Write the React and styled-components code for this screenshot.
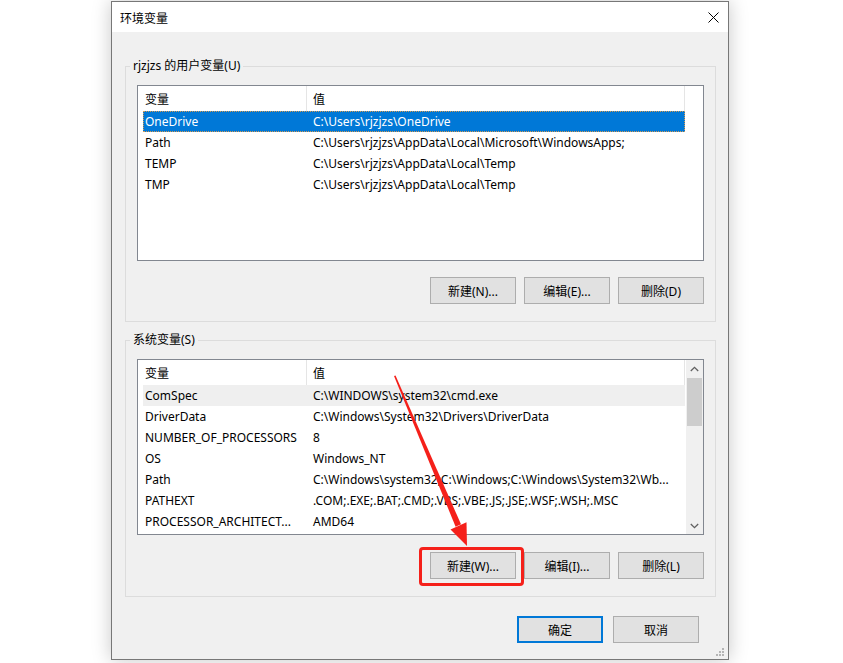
import React from "react";
import styled, { createGlobalStyle } from "styled-components";

const GlobalStyle = createGlobalStyle`
  html, body {
    margin: 0;
    padding: 0;
    background: #ffffff;
  }
  body {
    font-family: "Noto Sans", "Noto Sans CJK SC", sans-serif;
    font-size: 12px;
    color: #000;
  }
`;

const Page = styled.div`
  position: relative;
  width: 843px;
  height: 663px;
  overflow: hidden;
  padding-top: 1px;
  box-sizing: border-box;
`;

const Window = styled.div`
  position: relative;
  margin-left: 111px;
  width: 618px;
  box-sizing: border-box;
  border: 1px solid #777777;
  background: #f0f0f0;
  box-shadow: 0 0 18px rgba(0, 0, 0, 0.22);
`;

const TitleBar = styled.div`
  height: 30px;
  background: #ffffff;
  display: flex;
  align-items: center;
  justify-content: space-between;
  padding: 0 9px 0 8px;
  font-family: "Noto Sans CJK SC", sans-serif;
  font-size: 12px;
`;

const Body = styled.div`
  padding: 34px 12px 16px 13px;
  display: flex;
  flex-direction: column;
`;

const GroupBox = styled.div`
  border: 1px solid #dcdcdc;
  padding: 0 11px 17px 11px;
  margin-top: ${(p) => p.$gap || 0}px;
  display: flex;
  flex-direction: column;
`;

const GroupLabel = styled.div`
  margin: -9px 0 0 -7px;
  padding: 0 3px;
  width: fit-content;
  height: 16px;
  line-height: 16px;
  background: #f0f0f0;
  font-family: "Noto Sans", "Noto Sans CJK SC", sans-serif;
`;

const ListView = styled.div`
  margin-top: 11px;
  height: 176px;
  box-sizing: border-box;
  border: 1px solid #828790;
  background: #ffffff;
  display: flex;
  overflow: hidden;
`;

const ListContent = styled.div`
  flex: 1;
  display: flex;
  flex-direction: column;
  min-width: 0;
`;

const Header = styled.div`
  display: flex;
  height: 25px;
  flex-shrink: 0;
`;

const HeaderCell = styled.div`
  width: ${(p) => p.$w}px;
  box-sizing: border-box;
  padding-left: ${(p) => p.$pad}px;
  border-right: 1px solid #e5e5e5;
  display: flex;
  align-items: center;
  font-family: "Noto Sans CJK SC", sans-serif;
`;

const Rows = styled.div`
  padding-left: 5px;
  display: flex;
  flex-direction: column;
`;

const Row = styled.div`
  width: 542px;
  height: 21px;
  box-sizing: border-box;
  display: grid;
  grid-template-columns: 163px 1fr;
  align-items: center;
  white-space: nowrap;
  background: ${(p) => (p.$selected ? "#0078d7" : p.$hover ? "#efefef" : "transparent")};
  color: ${(p) => (p.$selected ? "#ffffff" : "#000000")};
  border: 1px dotted ${(p) => (p.$selected ? "#d49a52" : "transparent")};
`;

const NameCell = styled.span`
  padding-left: 1px;
  overflow: hidden;
`;

const ValueCell = styled.span`
  padding-left: 6px;
  overflow: hidden;
`;

const ScrollBar = styled.div`
  width: 17px;
  flex-shrink: 0;
  background: #f0f0f0;
  display: flex;
  flex-direction: column;
  align-items: center;
`;

const ScrollArrow = styled.div`
  height: 17px;
  width: 17px;
  display: flex;
  align-items: center;
  justify-content: center;
`;

const ScrollTrack = styled.div`
  flex: 1;
  width: 100%;
  display: flex;
  flex-direction: column;
  align-items: center;
`;

const ScrollThumb = styled.div`
  margin-top: 1px;
  width: 15px;
  height: 48px;
  background: #cdcdcd;
`;

const ButtonRow = styled.div`
  margin-top: ${(p) => p.$gap}px;
  display: flex;
  justify-content: flex-end;
  gap: ${(p) => p.$spacing || 8}px;
  padding-right: ${(p) => p.$right || 0}px;
`;

const ButtonWrap = styled.div`
  position: relative;
`;

const Button = styled.button`
  width: ${(p) => p.$w || 86}px;
  height: 27px;
  box-sizing: border-box;
  margin: 0;
  padding: 0;
  background: #e1e1e1;
  border: ${(p) => (p.$default ? "2px solid #0078d7" : "1px solid #adadad")};
  font-family: "Noto Sans", "Noto Sans CJK SC", sans-serif;
  font-size: 12px;
  color: #000;
`;

const Highlight = styled.div`
  position: absolute;
  top: -5px;
  left: -11px;
  right: -8px;
  bottom: -7px;
  border: 3px solid #f5201a;
  border-radius: 4px;
  pointer-events: none;
`;

const Grip = styled.svg`
  position: absolute;
  right: 3px;
  bottom: 2px;
`;

const Overlay = styled.svg`
  position: absolute;
  left: 0;
  top: 0;
  pointer-events: none;
`;

const userVars = [
  ["OneDrive", "C:\\Users\\rjzjzs\\OneDrive"],
  ["Path", "C:\\Users\\rjzjzs\\AppData\\Local\\Microsoft\\WindowsApps;"],
  ["TEMP", "C:\\Users\\rjzjzs\\AppData\\Local\\Temp"],
  ["TMP", "C:\\Users\\rjzjzs\\AppData\\Local\\Temp"],
];

const systemVars = [
  ["ComSpec", "C:\\WINDOWS\\system32\\cmd.exe"],
  ["DriverData", "C:\\Windows\\System32\\Drivers\\DriverData"],
  ["NUMBER_OF_PROCESSORS", "8"],
  ["OS", "Windows_NT"],
  ["Path", "C:\\Windows\\system32;C:\\Windows;C:\\Windows\\System32\\Wb..."],
  ["PATHEXT", ".COM;.EXE;.BAT;.CMD;.VBS;.VBE;.JS;.JSE;.WSF;.WSH;.MSC"],
  ["PROCESSOR_ARCHITECT...", "AMD64"],
];

function VarList({ rows, selected, hover, scroll }) {
  return (
    <ListView>
      <ListContent>
        <Header>
          <HeaderCell $w={169} $pad={7}>变量</HeaderCell>
          <HeaderCell $w={378} $pad={6}>值</HeaderCell>
        </Header>
        <Rows>
          {rows.map(([name, value], i) => (
            <Row key={name + i} $selected={i === selected} $hover={i === hover}>
              <NameCell>{name}</NameCell>
              <ValueCell>{value}</ValueCell>
            </Row>
          ))}
        </Rows>
      </ListContent>
      {scroll && (
        <ScrollBar>
          <ScrollArrow>
            <svg width="9" height="6" viewBox="0 0 9 6">
              <path d="M0.8 5 L4.5 1.3 L8.2 5" fill="none" stroke="#606060" strokeWidth="1.3" />
            </svg>
          </ScrollArrow>
          <ScrollTrack>
            <ScrollThumb />
          </ScrollTrack>
          <ScrollArrow>
            <svg width="9" height="6" viewBox="0 0 9 6">
              <path d="M0.8 1 L4.5 4.7 L8.2 1" fill="none" stroke="#606060" strokeWidth="1.3" />
            </svg>
          </ScrollArrow>
        </ScrollBar>
      )}
    </ListView>
  );
}

export default function App() {
  return (
    <Page>
      <GlobalStyle />
      <Window>
        <TitleBar>
          <span>环境变量</span>
          <svg width="11" height="11" viewBox="0 0 11 11">
            <path d="M0.5 0.5 L10.5 10.5 M10.5 0.5 L0.5 10.5" stroke="#000" strokeWidth="1" />
          </svg>
        </TitleBar>
        <Body>
          <GroupBox>
            <GroupLabel>rjzjzs 的用户变量(U)</GroupLabel>
            <VarList rows={userVars} selected={0} />
            <ButtonRow $gap={16}>
              <Button>新建(N)...</Button>
              <Button>编辑(E)...</Button>
              <Button>删除(D)</Button>
            </ButtonRow>
          </GroupBox>
          <GroupBox $gap={18}>
            <GroupLabel>系统变量(S)</GroupLabel>
            <VarList rows={systemVars} hover={0} scroll />
            <ButtonRow $gap={17}>
              <ButtonWrap>
                <Button>新建(W)...</Button>
                <Highlight />
              </ButtonWrap>
              <Button>编辑(I)...</Button>
              <Button>删除(L)</Button>
            </ButtonRow>
          </GroupBox>
          <ButtonRow $gap={19} $spacing={10} $right={17}>
            <Button $default>确定</Button>
            <Button>取消</Button>
          </ButtonRow>
        </Body>
        <Grip width="9" height="9" viewBox="0 0 9 9">
          <g fill="#b4b4b4">
            <rect x="6" y="0" width="2" height="2" />
            <rect x="3" y="3" width="2" height="2" />
            <rect x="6" y="3" width="2" height="2" />
            <rect x="0" y="6" width="2" height="2" />
            <rect x="3" y="6" width="2" height="2" />
            <rect x="6" y="6" width="2" height="2" />
          </g>
        </Grip>
      </Window>
      <Overlay width="843" height="663" viewBox="0 0 843 663">
        <polygon points="394,376 395.5,375.5 461,524.3 455.6,526.7" fill="#f5201a" />
        <polygon points="467,546 450.5,529.5 466.5,522.3" fill="#f5201a" />
      </Overlay>
    </Page>
  );
}
